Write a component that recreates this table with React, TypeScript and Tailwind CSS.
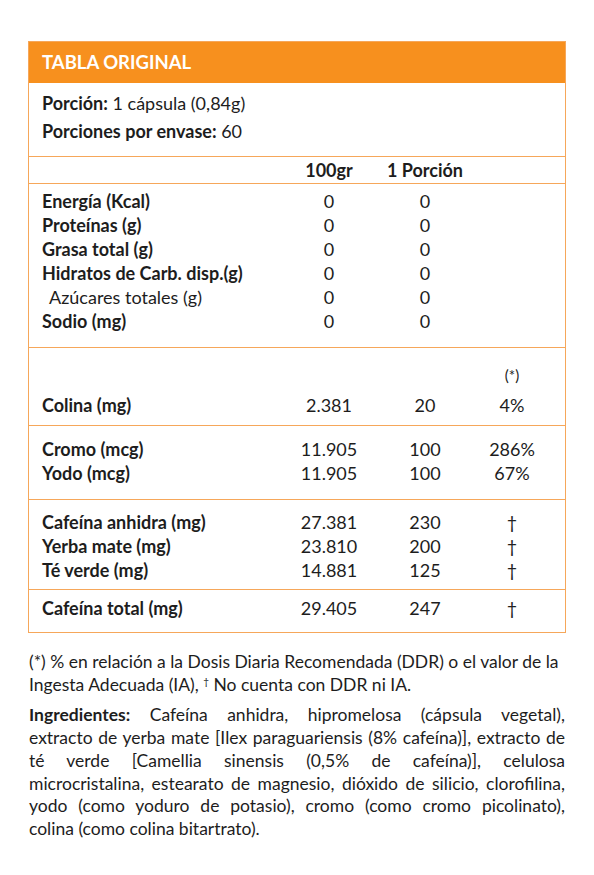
const cols = 'grid grid-cols-[245px_84px_108px_66px]';

type Row = { label: string; a: string; b: string; c?: string; bold?: boolean };

const nutrients: Row[] = [
  { label: 'Energía (Kcal)', a: '0', b: '0' },
  { label: 'Proteínas (g)', a: '0', b: '0' },
  { label: 'Grasa total (g)', a: '0', b: '0' },
  { label: 'Hidratos de Carb. disp.(g)', a: '0', b: '0' },
  { label: 'Azúcares totales (g)', a: '0', b: '0', bold: false },
  { label: 'Sodio (mg)', a: '0', b: '0' },
];

const minerals: Row[] = [
  { label: 'Cromo (mcg)', a: '11.905', b: '100', c: '286%' },
  { label: 'Yodo (mcg)', a: '11.905', b: '100', c: '67%' },
];

const caffeine: Row[] = [
  { label: 'Cafeína anhidra (mg)', a: '27.381', b: '230', c: '†' },
  { label: 'Yerba mate (mg)', a: '23.810', b: '200', c: '†' },
  { label: 'Té verde (mg)', a: '14.881', b: '125', c: '†' },
];

// ingredient lines, justified one by one like the printed label
const ingredientLines = [
  'extracto de yerba mate [Ilex paraguariensis (8% cafeína)], extracto de',
  'té verde [Camellia sinensis (0,5% de cafeína)], celulosa',
  'microcristalina, estearato de magnesio, dióxido de silicio, clorofilina,',
  'yodo (como yoduro de potasio), cromo (como cromo picolinato),',
];

const DataRow = ({ row }: { row: Row }) => (
  <div className={`${cols} leading-[24px]`}>
    <div className={row.bold === false ? 'font-normal pl-[7px]' : 'font-bold'}>{row.label}</div>
    <div className="text-center">{row.a}</div>
    <div className="text-center">{row.b}</div>
    <div className="text-center">{row.c ?? ''}</div>
  </div>
);

export default function App() {
  return (
    <div className="min-h-screen bg-white pt-[41px] text-[#1d1d1d] font-['Lato',sans-serif]">
      <div className="mx-[28px] border border-[#f6a75a] text-[18px]">
        <div className="bg-[#f7901e] h-[41px] pl-[13px] flex items-center text-white font-bold text-[18.5px]">
          TABLA ORIGINAL
        </div>

        <div className="px-[13px] pt-[6px] pb-[11px] leading-[28px]">
          <div>
            <span className="font-bold">Porción:</span> 1 cápsula (0,84g)
          </div>
          <div>
            <span className="font-bold">Porciones por envase:</span> 60
          </div>
        </div>

        <div className={`${cols} px-[13px] border-t border-b border-[#f6a75a] h-[28px] items-center font-bold`}>
          <div />
          <div className="text-center">100gr</div>
          <div className="text-center">1 Porción</div>
          <div />
        </div>

        <div className="px-[13px] pt-[5px] pb-[14px]">
          {nutrients.map((r) => (
            <DataRow key={r.label} row={r} />
          ))}
        </div>

        <div className="px-[13px] pt-[14px] pb-[8px] border-t border-[#f6a75a]">
          <div className={`${cols} leading-[26px] h-[31px]`}>
            <div />
            <div />
            <div />
            <div className="text-center text-[15px]">(*)</div>
          </div>
          <DataRow row={{ label: 'Colina (mg)', a: '2.381', b: '20', c: '4%' }} />
        </div>

        <div className="px-[13px] pt-[11px] pb-[14px] border-t border-[#f6a75a]">
          {minerals.map((r) => (
            <DataRow key={r.label} row={r} />
          ))}
        </div>

        <div className="px-[13px] pt-[10px] pb-[7px] border-t border-[#f6a75a]">
          {caffeine.map((r) => (
            <DataRow key={r.label} row={r} />
          ))}
        </div>

        <div className="px-[13px] pt-[6px] pb-[12px] border-t border-[#f6a75a]">
          <DataRow row={{ label: 'Cafeína total (mg)', a: '29.405', b: '247', c: '†' }} />
        </div>
      </div>

      <div className="mx-[29px] mt-[18px] text-[17.5px] leading-[22.7px]">
        <div>
          <p className="whitespace-nowrap">
            (*) % en relación a la Dosis Diaria Recomendada (DDR) o el valor de la
          </p>
          <p className="whitespace-nowrap">
            Ingesta Adecuada (IA), <span className="text-[10px] align-top leading-[14px]">†</span> No cuenta con
            DDR ni IA.
          </p>
        </div>
        <div className="mt-[8px]">
          <p className="text-justify [text-align-last:justify] whitespace-nowrap">
            <span className="font-bold">Ingredientes:</span> Cafeína anhidra, hipromelosa (cápsula vegetal),
          </p>
          {ingredientLines.map((line) => (
            <p key={line} className="text-justify [text-align-last:justify] whitespace-nowrap">
              {line}
            </p>
          ))}
          <p>colina (como colina bitartrato).</p>
        </div>
      </div>
    </div>
  );
}
